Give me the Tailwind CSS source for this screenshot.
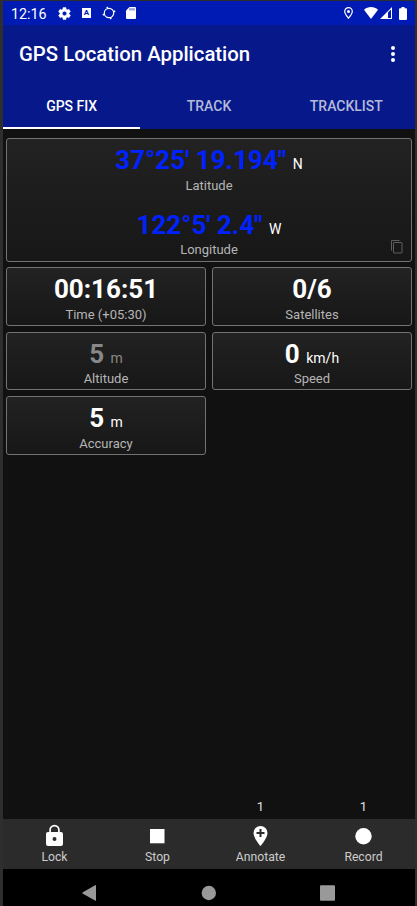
<!DOCTYPE html>
<html lang="en">
<head>
<meta charset="utf-8">
<title>GPS Location Application</title>
<script src="https://cdn.jsdelivr.net/npm/@tailwindcss/browser@4"></script>
</head>
<body class="w-[417px] h-[906px] overflow-hidden bg-[#2e2e2e] pt-px pl-[3px] pr-[2px] font-['Roboto',sans-serif] text-white">
<div class="flex flex-col h-[905px] w-[412px] bg-[#111111]">
  <!-- Status bar -->
  <div class="flex items-center h-6 shrink-0 bg-[#001bb3] pl-2 pr-2">
    <span class="text-[14.3px] leading-6 w-[46px] whitespace-nowrap pt-[2px]">12:16</span>
    <svg class="w-[15px] h-[15px] ml-0" viewBox="0 0 24 24" fill="#fff"><path stroke="#fff" stroke-width=".8" d="M19.14 12.94c.04-.3.06-.61.06-.94s-.02-.64-.07-.94l2.03-1.58a.49.49 0 0 0 .12-.61l-1.92-3.32a.49.49 0 0 0-.59-.22l-2.39.96a7 7 0 0 0-1.62-.94l-.36-2.54a.48.48 0 0 0-.48-.41h-3.84a.48.48 0 0 0-.47.41l-.36 2.54c-.59.24-1.13.57-1.62.94l-2.39-.96a.48.48 0 0 0-.59.22L2.74 8.87a.48.48 0 0 0 .12.61l2.03 1.58a6.400 6.400 0 0 0 0 1.880l-2.030 1.580a.49.49 0 0 0-.12.61l1.920 3.320c.12.22.37.29.59.22l2.390-.96c.5.38 1.030.7 1.620.94l.36 2.540c.05.24.24.41.48.41h3.840c.24 0 .44-.17.47-.41l.36-2.540a7 7 0 0 0 1.620-.94l2.390.96c.22.08.47 0 .59-.22l1.920-3.320a.48.48 0 0 0-.12-.61zM12 15.600a3.600 3.600 0 1 1 0-7.200 3.600 3.600 0 0 1 0 7.200z"/></svg>
    <span class="ml-[10px] w-[9px] h-[10px] bg-white text-[#001bb3] text-[8px] font-bold leading-[10px] text-center">A</span>
    <svg class="w-[14px] h-[14px] ml-[11px]" viewBox="0 0 14 14" fill="none" stroke="#fff"><circle cx="7" cy="7" r="4.700" stroke-width="1.200"/><path stroke-width="1.400" d="M4.800 .8l1 1.500M13.200 4.800l-1.500 1M9.200 13.200l-1-1.500M.8 9.200l1.500-1"/></svg>
    <svg class="w-[10px] h-[12px] ml-[10px]" viewBox="0 0 10 12"><path fill="#fff" d="M3.500 0H9a1 1 0 0 1 1 1v10a1 1 0 0 1-1 1H1a1 1 0 0 1-1-1V3.500z"/><path stroke="#001bb3" stroke-width=".8" d="M4 1.200v2.300M6 1.200v2.300M8 1.200v2.300"/></svg>
    <svg class="w-[9px] h-[12px] ml-auto" viewBox="0 0 9 12"><path fill="none" stroke="#fff" stroke-width="1.200" d="M4.500 11.200C2.600 8.800.7 6.500.7 4.400a3.800 3.800 0 0 1 7.600 0c0 2.100-1.900 4.400-3.800 6.800z"/><circle cx="4.500" cy="4.500" r="1.500" fill="#fff"/></svg>
    <svg class="w-[14px] h-[12px] ml-[11px]" viewBox="0 0 15 12" preserveAspectRatio="none"><path fill="#fff" d="M0 2.700C4 -.9 11 -.9 15 2.700L7.500 12z"/></svg>
    <svg class="w-[12px] h-[12px] ml-[2px]" viewBox="0 0 12 12"><path fill="#fff" fill-rule="evenodd" d="M12 0v12H0zM11 2.500L8 5.400V11h3z"/></svg>
    <svg class="w-[8px] h-[13px] ml-[7px]" viewBox="0 0 8 13"><path fill="#fff" d="M2.500 0h3v1.300H7a1 1 0 0 1 1 1V12a1 1 0 0 1-1 1H1a1 1 0 0 1-1-1V2.300a1 1 0 0 1 1-1h1.500z"/></svg>
  </div>
  <!-- App bar -->
  <header class="h-[104px] shrink-0 bg-[#07198a] flex flex-col">
    <div class="flex items-center justify-between h-[57px] shrink-0 pl-4 pr-5">
      <h1 class="text-[20.35px] leading-6 font-medium whitespace-nowrap">GPS Location Application</h1>
      <svg class="w-[4px] h-[16px]" viewBox="0 0 4 16" fill="#fff"><circle cx="2" cy="2" r="2"/><circle cx="2" cy="8" r="2"/><circle cx="2" cy="14" r="2"/></svg>
    </div>
    <nav class="grid grid-cols-3 h-[47px] text-[14px] font-medium text-center leading-[42px]">
      <div class="h-[47px] pt-[3px] border-b-2 border-white">GPS FIX</div>
      <div class="h-[47px] pt-[3px] text-[#b4bada]">TRACK</div>
      <div class="h-[47px] pt-[3px] text-[#b4bada]">TRACKLIST</div>
    </nav>
  </header>
  <!-- Readings -->
  <main class="grow grid grid-cols-2 content-start gap-x-[6px] gap-y-[5.500px] px-[3px] pt-[9px] text-center">
    <section class="relative col-span-2 h-[123.500px] rounded-[3px] border border-[#737373] bg-linear-to-b from-[#222222] to-[#171717] pt-[6px]">
      <div class="h-[64.500px]">
        <div class="h-[30px] text-[26px] leading-[30px] font-bold text-[#0022ff]">37°25' 19.194" <span class="text-[14px] leading-none font-normal text-white">N</span></div>
        <div class="text-[13px] leading-[18px] pt-[2px] text-[#b5b5b5]">Latitude</div>
      </div>
      <div>
        <div class="h-[30px] text-[26px] leading-[30px] font-bold text-[#0022ff]">122°5' 2.4" <span class="text-[14px] leading-none font-normal text-white">W</span></div>
        <div class="text-[13px] leading-[18px] pt-[1.500px] text-[#b5b5b5]">Longitude</div>
      </div>
      <svg class="absolute right-[8px] bottom-[7px] w-[12px] h-[14px]" viewBox="0 0 12 14" fill="none" stroke="#5e5e5e"><path d="M.5 10.500V.5h8"/><rect x="2.500" y="2.500" width="8.500" height="10.500" rx=".5"/></svg>
    </section>
    <section class="h-[59px] rounded-[3px] border border-[#737373] bg-linear-to-b from-[#222222] to-[#171717] pt-[6px]">
      <div class="h-[30px] text-[26px] leading-[30px] font-bold">00:16:51</div>
      <div class="text-[13px] leading-[18px] pt-[2px] text-[#b5b5b5]">Time (+05:30)</div>
    </section>
    <section class="h-[59px] rounded-[3px] border border-[#737373] bg-linear-to-b from-[#222222] to-[#171717] pt-[6px]">
      <div class="h-[30px] text-[26px] leading-[30px] font-bold">0/6</div>
      <div class="text-[13px] leading-[18px] pt-[2px] text-[#b5b5b5]">Satellites</div>
    </section>
    <section class="h-[58.400px] mb-[.6px] rounded-[3px] border border-[#737373] bg-linear-to-b from-[#222222] to-[#171717] pt-[6px]">
      <div class="h-[30px] text-[26px] leading-[30px] font-bold text-[#888888]">5 <span class="text-[14px] leading-none font-normal">m</span></div>
      <div class="text-[13px] leading-[18px] pt-[1.500px] text-[#b5b5b5]">Altitude</div>
    </section>
    <section class="h-[58.400px] mb-[.6px] rounded-[3px] border border-[#737373] bg-linear-to-b from-[#222222] to-[#171717] pt-[6px]">
      <div class="h-[30px] text-[26px] leading-[30px] font-bold">0 <span class="text-[14px] leading-none font-normal">km/h</span></div>
      <div class="text-[13px] leading-[18px] pt-[1.500px] text-[#b5b5b5]">Speed</div>
    </section>
    <section class="h-[59px] rounded-[3px] border border-[#737373] bg-linear-to-b from-[#222222] to-[#171717] pt-[6px]">
      <div class="h-[30px] text-[26px] leading-[30px] font-bold">5 <span class="text-[14px] leading-none font-normal">m</span></div>
      <div class="text-[13px] leading-[18px] pt-[2px] text-[#b5b5b5]">Accuracy</div>
    </section>
  </main>
  <!-- Counters -->
  <div class="grid grid-cols-4 h-5 shrink-0 text-center text-[13px] leading-4 text-[#e0e0e0]">
    <span></span><span></span><span>1</span><span>1</span>
  </div>
  <!-- Actions -->
  <footer class="grid grid-cols-4 h-[50px] shrink-0 bg-[#2b2b2b] text-center text-[12.200px] text-[#cccccc]">
    <div class="flex flex-col items-center pt-[5px]">
      <svg class="w-[17px] h-[24px]" viewBox="0 0 17 24"><path fill="none" stroke="#fff" stroke-width="1.700" d="M4.100 9V6a4.400 4.400 0 0 1 8.800 0V9"/><path fill="#fff" fill-rule="evenodd" d="M2 8h13a2 2 0 0 1 2 2v10a2 2 0 0 1-2 2H2a2 2 0 0 1-2-2V10a2 2 0 0 1 2-2zM8.500 13a2 2 0 1 0 0 4 2 2 0 0 0 0-4z"/></svg>
      <span class="leading-[18px]">Lock</span>
    </div>
    <div class="flex flex-col items-center pt-[5px]">
      <svg class="w-[17px] h-[24px]" viewBox="0 0 17 24"><path fill="#fff" d="M1 5h14.500v14.300H1z"/></svg>
      <span class="leading-[18px]">Stop</span>
    </div>
    <div class="flex flex-col items-center pt-[5px]">
      <svg class="w-[17px] h-[24px]" viewBox="0 0 17 24"><path fill="#fff" d="M8.500 2A7 7 0 0 0 1.500 9c0 5 7 13 7 13s7-8 7-13a7 7 0 0 0-7-7z"/><path stroke="#2b2b2b" stroke-width="2" d="M8.500 5v8M4.500 9h8"/></svg>
      <span class="leading-[18px]">Annotate</span>
    </div>
    <div class="flex flex-col items-center pt-[5px]">
      <svg class="w-[17px] h-[24px]" viewBox="0 0 17 24"><circle cx="8.500" cy="12.300" r="8.200" fill="#fff"/></svg>
      <span class="leading-[18px]">Record</span>
    </div>
  </footer>
  <!-- System navigation -->
  <div class="flex justify-between h-[37px] shrink-0 bg-black pl-[79px] pr-[80px] pt-[16px]">
    <svg class="w-[14px] h-[16px]" viewBox="0 0 14 16"><path fill="#999" d="M13.500 0Q14 0 14 .5V15.500Q14 16 13.500 15.800L.5 8.500Q0 8 .5 7.500z"/></svg>
    <svg class="w-[15px] h-[16px]" viewBox="0 0 15 16"><circle cx="7.800" cy="8" r="7.200" fill="#999"/></svg>
    <svg class="w-[15px] h-[16px]" viewBox="0 0 15 16"><rect y=".3" width="15" height="15.500" rx="1" fill="#999"/></svg>
  </div>
</div>
</body>
</html>
